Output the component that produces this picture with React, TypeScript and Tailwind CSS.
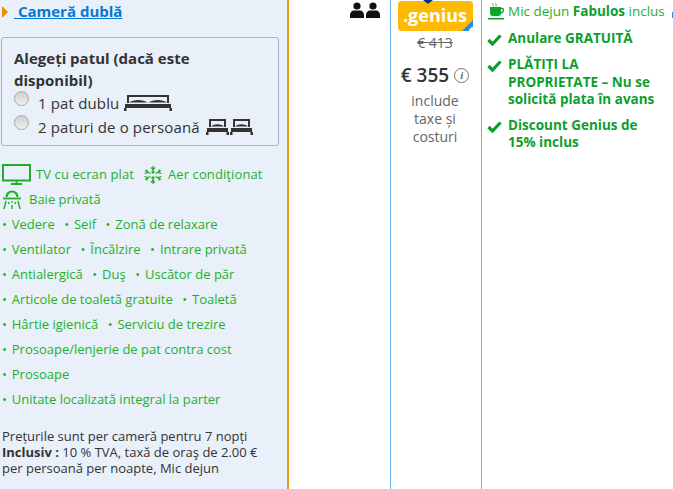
const facilityRows = [
  ['Vedere', 'Seif', 'Zonă de relaxare'],
  ['Ventilator', 'Încălzire', 'Intrare privată'],
  ['Antialergică', 'Duş', 'Uscător de păr'],
  ['Articole de toaletă gratuite', 'Toaletă'],
  ['Hârtie igienică', 'Serviciu de trezire'],
  ['Prosoape/lenjerie de pat contra cost'],
  ['Prosoape'],
  ['Unitate localizată integral la parter'],
];

function DoubleBed() {
  return (
    <svg width="48" height="16" viewBox="0 0 48 16" className="ml-[5px] shrink-0" fill="#333">
      <path d="M3 0h42v2H3zM3 0h2v8H3zM43 0h2v8h-2zM5 7.500c4-3.500 14-3.500 18.500 0zM24.500 7.500c4.500-3.500 14.500-3.500 18.500 0z" />
      <path d="M1 9h46v4H1zM0 13h2.500v3H0zM45.500 13H48v3h-2.500z" />
    </svg>
  );
}

function SingleBed() {
  return (
    <svg width="24" height="16" viewBox="0 0 24 16" fill="#333">
      <path d="M3 0h17v2H3zM3 0h2v8H3zM18 0h2v8h-2zM5 7.500c3-3 10-3 13 0z" />
      <path d="M1 9h21v4H1zM0 13h2.500v3H0zM20.500 13H23v3h-2.500z" />
    </svg>
  );
}

function TvIcon() {
  return (
    <svg width="29" height="21" viewBox="0 0 29 21" fill="none" stroke="#1fb028" className="shrink-0">
      <rect x="1" y="1" width="27" height="15.500" strokeWidth="2" />
      <path d="M14.500 17v2M9 20h11" strokeWidth="1.800" />
    </svg>
  );
}

function SnowIcon() {
  return (
    <svg width="20" height="20" viewBox="0 0 20 20" fill="none" stroke="#1fb028" strokeWidth="1.300" className="shrink-0">
      <path d="M10 1v6M10 13v6M2 5.500l5.500 3M12.500 11.500l5.500 3M2 14.500l5.500-3M12.500 8.500l5.500-3" />
      <path d="M8 2.500l2 2 2-2M8 17.500l2-2 2 2M8.500 6.500 10 8l1.500-1.500M8.500 13.500 10 12l1.500 1.500" />
      <path d="M1.500 8.500l3-1-1-3M18.500 11.500l-3 1 1 3M1.500 11.500l3 1-1 3M18.500 8.500l-3-1 1-3" />
    </svg>
  );
}

function ShowerIcon() {
  return (
    <svg width="20" height="21" viewBox="0 0 20 21" fill="none" stroke="#1fb028" strokeWidth="1.400" className="shrink-0">
      <path d="M4.500 8a5.500 5.500 0 0 1 11 0" strokeWidth="2.200" />
      <path d="M1 9.500h18" strokeWidth="1.800" />
      <path d="M4 12 2 20M10 12v1.500M10 16v4M16 12l2 8M7 13l-.5 2M13 13l.5 2" />
    </svg>
  );
}

function CupIcon() {
  return (
    <svg width="17" height="17" viewBox="0 0 17 17" className="ml-[1px] mr-[3px] shrink-0">
      <path d="M5 0c-1 1.500 1 2 0 3.500M8 0c-1 1.500 1 2 0 3.500" fill="none" stroke="#8a9a5a" strokeWidth="1" />
      <path d="M2 4h11v6c0 2-1 3-2.500 3h-6C3 13 2 12 2 10z" fill="#0aa52c" />
      <path d="M13 5.500h1.500c1.500 0 1.500 4-1.500 4.500" fill="none" stroke="#0aa52c" strokeWidth="1.300" />
      <path d="M0 15h16v1.500H0z" fill="#0aa52c" />
    </svg>
  );
}

function GreenCheck() {
  return (
    <svg width="15" height="12" viewBox="0 0 15 12" fill="none" stroke="#0a9f2c" strokeWidth="3.200" className="mt-[4px] shrink-0">
      <path d="M1.500 6l4 4 8-8.500" />
    </svg>
  );
}

export default function App() {
  return (
    <div className="flex h-[489px] w-[673px] overflow-hidden bg-white font-['Open_Sans','Noto_Sans',sans-serif] text-[13px] text-[#333]">
      <div className="h-full w-[289px] shrink-0 border-r-2 border-[#ee9a18] bg-[#e9f0fa] pl-[1px]">
        <div className="flex h-[23px] items-center pl-[1px]">
          <span className="h-0 w-0 border-y-[6px] border-l-[6px] border-y-transparent border-l-[#f08a00]" />
          <a className="ml-[6px] text-[15px] font-bold text-[#0777cf] underline">{'\u00a0'}Cameră dublă</a>
        </div>

        <div className="mt-[14px] h-[109px] w-[278px] rounded-[3px] border border-[#9db4d8] pl-[12px] pt-[9px]">
          <div className="text-[15px] font-bold leading-[22px] text-[#333]">
            Alegeți patul (dacă este
            <br />
            disponibil)
          </div>
          <div className="flex h-[24px] items-center text-[15px] tracking-[0.15px]">
            <span className="mb-[10px] mr-[9px] h-[15px] w-[15px] rounded-full border border-[#aaa] bg-linear-to-b from-[#cfcfcf] to-[#eee]" />
            1 pat dublu
            <DoubleBed />
          </div>
          <div className="flex h-[24px] items-center text-[15px] tracking-[0.15px]">
            <span className="mb-[10px] mr-[9px] h-[15px] w-[15px] rounded-full border border-[#aaa] bg-linear-to-b from-[#cfcfcf] to-[#eee]" />
            2 paturi de o persoană
            <span className="ml-[6px] flex">
              <SingleBed />
              <SingleBed />
            </span>
          </div>
        </div>

        <div className="mt-[16px] pl-[1px] text-[#1fb028]">
          <div className="flex h-[25px] items-center">
            <TvIcon />
            <span className="ml-[5px] tracking-[0.1px]">TV cu ecran plat</span>
            <span className="ml-[9px]">
              <SnowIcon />
            </span>
            <span className="ml-[5px] tracking-[0.1px]">Aer condiţionat</span>
          </div>
          <div className="flex h-[25px] items-center">
            <ShowerIcon />
            <span className="ml-[7px]">Baie privată</span>
          </div>
          {facilityRows.map((row) => (
            <div key={row[0]} className="flex h-[25px] items-center gap-[9.5px]">
              {row.map((item) => (
                <span key={item}>
                  <span className="mr-[1.500px]">•</span> {item}
                </span>
              ))}
            </div>
          ))}
        </div>

        <p className="mt-[16px] pl-[1px] leading-[16px] text-[#333]">
          Prețurile sunt per cameră pentru 7 nopți
          <br />
          <b>Inclusiv :</b> 10 % TVA, taxă de oraş de 2.00 €
          <br />
          per persoană per noapte, Mic dejun
        </p>
      </div>

      <div className="flex h-full w-[102px] shrink-0 justify-end border-r border-[#6ab3f0] pr-[10px] pt-[2px]">
        <svg width="30" height="17" viewBox="0 0 30 17" fill="#111">
          <circle cx="7" cy="4" r="3.600" />
          <path d="M0 16v-3c0-3 2-4.500 4-4.500h6c2 0 4 1.500 4 4.500v3z" />
          <circle cx="23" cy="4" r="3.600" />
          <path d="M16 16v-3c0-3 2-4.500 4-4.500h6c2 0 4 1.500 4 4.500v3z" />
        </svg>
      </div>

      <div className="relative flex h-full w-[91px] shrink-0 flex-col items-center border-r border-[#6ab3f0] pr-[2px] text-[#666]">
        <div className="relative mt-[1px] h-[30px] w-[75px] overflow-hidden rounded-[4px] bg-[#feba02] text-center text-[18px] font-bold leading-[28px] text-white">
          .genius
          <svg width="11" height="11" viewBox="0 0 11 11" className="absolute bottom-0 right-0">
            <path d="M11 0v7c-2 0-3.500 2-4 4H0z" fill="#1f8fe8" />
            <path d="M11 7v4H7c.5-2 2-4 4-4z" fill="#fff" />
          </svg>
        </div>
        <span className="absolute left-[32px] top-0 h-0 w-0 border-x-[5px] border-t-[4px] border-x-transparent border-t-[#003580]" />
        <div className="mt-[2px] text-[14px] leading-[20px] line-through">€ 413</div>
        <div className="mt-[8px] flex items-center gap-[5px] text-[19px] font-semibold leading-[28px] text-[#333]">
          € 355
          <span className="flex h-[15px] w-[15px] items-center justify-center rounded-full border border-[#777] font-['Liberation_Serif',serif] text-[11px] font-bold italic leading-none text-[#666]">
            i
          </span>
        </div>
        <div className="mt-[3px] text-center text-[14px] leading-[18px]">
          include
          <br />
          taxe și
          <br />
          costuri
        </div>
      </div>

      <div className="relative min-w-0 flex-1 pl-[5px] text-[13.5px] text-[#0a9f2c]">
        <span className="absolute right-0 top-[12px] h-[6px] w-[1px] bg-[#2b8de0]" />
        <div className="mt-[1px] flex h-[20px] items-center text-[#1fb028]">
          <CupIcon />
          <span className="whitespace-nowrap">
            Mic dejun <b className="text-[#0a9f2c]">Fabulos</b> inclus
          </span>
        </div>
        <div className="mt-[9px] flex gap-[6px] font-bold leading-[17.3px]">
          <GreenCheck />
          <span>Anulare GRATUITĂ</span>
        </div>
        <div className="mt-[9px] flex gap-[6px] font-bold leading-[17.3px]">
          <GreenCheck />
          <span className="w-[155px]">
            PLĂTIȚI LA
            <br />
            PROPRIETATE – Nu se solicită plata în avans
          </span>
        </div>
        <div className="mt-[9px] flex gap-[6px] font-bold leading-[17.3px]">
          <GreenCheck />
          <span className="w-[155px]">
            Discount Genius de
            <br />
            15% inclus
          </span>
        </div>
      </div>
    </div>
  );
}
